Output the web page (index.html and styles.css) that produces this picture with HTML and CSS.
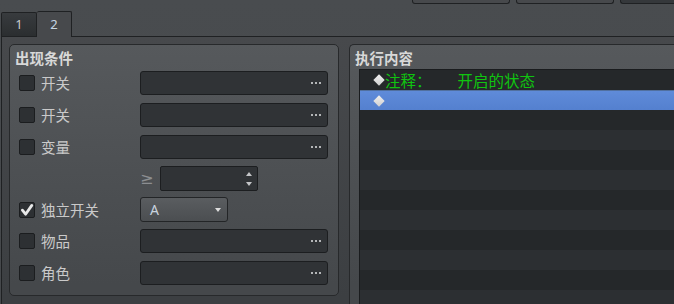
FILE: index.html
```html
<!DOCTYPE html>
<html>
<head>
<meta charset="utf-8">
<link rel="stylesheet" href="styles.css">
</head>
<body>
<div class="top">
  <div class="tbtn"></div>
  <div class="tbtn"></div>
  <div class="tbtn dark"></div>
</div>
<div class="tabbar">
  <div class="tab">1</div>
  <div class="tab active">2</div>
</div>
<div class="pane">
  <div class="group left">
    <div class="gtitle">出现条件</div>
    <div class="rows">
      <div class="row r1">
        <span class="chk"></span><span class="lbl">开关</span>
        <span class="field"><svg class="dots" width="10" height="2" viewBox="0 0 10 2"><rect x="0" y="0" width="2" height="2"/><rect x="4" y="0" width="2" height="2"/><rect x="8" y="0" width="2" height="2"/></svg></span>
      </div>
      <div class="row">
        <span class="chk"></span><span class="lbl">开关</span>
        <span class="field"><svg class="dots" width="10" height="2" viewBox="0 0 10 2"><rect x="0" y="0" width="2" height="2"/><rect x="4" y="0" width="2" height="2"/><rect x="8" y="0" width="2" height="2"/></svg></span>
      </div>
      <div class="row">
        <span class="chk"></span><span class="lbl">变量</span>
        <span class="field"><svg class="dots" width="10" height="2" viewBox="0 0 10 2"><rect x="0" y="0" width="2" height="2"/><rect x="4" y="0" width="2" height="2"/><rect x="8" y="0" width="2" height="2"/></svg></span>
      </div>
      <div class="row spinrow">
        <span class="indent"></span>
        <span class="ge">≥</span>
        <span class="spin"><span class="arrows"><span class="up"></span><span class="down"></span></span></span>
      </div>
      <div class="row comborow">
        <span class="chk on"><svg width="14" height="14" viewBox="0 0 14 14"><path d="M2.4 7.2 L5.6 11.2 L11.8 2.4" fill="none" stroke="#e8e8e8" stroke-width="2.8" stroke-linecap="round" stroke-linejoin="round"/></svg></span><span class="lbl">独立开关</span>
        <span class="combo"><span class="cval">A</span><span class="carrow"></span></span>
      </div>
      <div class="row">
        <span class="chk"></span><span class="lbl">物品</span>
        <span class="field"><svg class="dots" width="10" height="2" viewBox="0 0 10 2"><rect x="0" y="0" width="2" height="2"/><rect x="4" y="0" width="2" height="2"/><rect x="8" y="0" width="2" height="2"/></svg></span>
      </div>
      <div class="row">
        <span class="chk"></span><span class="lbl">角色</span>
        <span class="field"><svg class="dots" width="10" height="2" viewBox="0 0 10 2"><rect x="0" y="0" width="2" height="2"/><rect x="4" y="0" width="2" height="2"/><rect x="8" y="0" width="2" height="2"/></svg></span>
      </div>
    </div>
  </div>
  <div class="group right">
    <div class="gtitle rt">执行内容</div>
    <div class="list">
      <div class="lrow dark"><span class="dia"><i></i></span><span class="cmt">注释：</span><span class="cmt gap">开启的状态</span></div>
      <div class="lrow sel"><span class="dia"><i></i></span></div>
      <div class="lrow dark"></div>
      <div class="lrow light"></div>
      <div class="lrow dark"></div>
      <div class="lrow light"></div>
      <div class="lrow dark"></div>
      <div class="lrow light"></div>
      <div class="lrow dark"></div>
      <div class="lrow light"></div>
      <div class="lrow dark"></div>
      <div class="lrow light"></div>
    </div>
  </div>
</div>
</body>
</html>
```

FILE: styles.css
```css
html, body {
  margin: 0;
  padding: 0;
}
body {
  width: 674px;
  height: 304px;
  overflow: hidden;
  background: linear-gradient(#494c4f, #45484b);
  font-family: "Noto Sans CJK SC", "Noto Sans", sans-serif;
}
.top {
  height: 11px;
  display: flex;
  align-items: flex-start;
  gap: 6px;
  padding-left: 412px;
}
.tbtn {
  flex: none;
  width: 96px;
  height: 3px;
  border: 1px solid #1f2123;
  border-top: none;
  border-radius: 0 0 3px 3px;
  background: #47494c;
}
.tbtn.dark {
  width: 53px;
  border-right: none;
  border-radius: 0 0 0 3px;
  background: #35383b;
}
.tabbar {
  height: 25px;
  display: flex;
  align-items: flex-end;
  padding-left: 1px;
  position: relative;
  z-index: 2;
}
.tab {
  box-sizing: border-box;
  width: 36px;
  height: 24px;
  border: 1px solid #1f2123;
  border-bottom: none;
  border-radius: 2px 2px 0 0;
  background: linear-gradient(#383b3e, #2b2e30);
  color: #c9cbcd;
  font-family: "Noto Sans", sans-serif;
  font-size: 13px;
  line-height: 22px;
  text-align: center;
}
.tab.active {
  width: 35px;
  height: 26px;
  border-left: none;
  margin-bottom: -1px;
  background: #47494c;
  color: #c8d6e4;
  line-height: 24px;
}
.pane {
  margin-left: 1px;
  height: 260px;
  border-top: 1px solid #1f2123;
  border-left: 1px solid #1f2123;
  background: linear-gradient(#47494c, #3c3f42 260px);
  display: flex;
  gap: 10px;
  padding: 7px 0 0 7px;
}
.group {
  flex: none;
  box-sizing: border-box;
  border: 1px solid #27292b;
  border-radius: 5px;
  background: linear-gradient(#56595c, #45484b 240px);
}
.group.left {
  width: 330px;
  height: 252px;
}
.group.right {
  width: 325px;
  height: 260px;
  border-right: none;
  border-bottom: none;
  border-radius: 5px 0 0 0;
  overflow: hidden;
}
.gtitle {
  padding: 3px 0 0 5px;
  height: 20px;
  line-height: 20px;
  margin-bottom: 3px;
  font-size: 14.5px;
  font-weight: bold;
  color: #d8d8d8;
}
.gtitle.rt {
  margin-bottom: 1px;
}
.rows {
  display: flex;
  flex-direction: column;
  padding-left: 9px;
}
.row {
  display: flex;
  align-items: center;
  height: 24px;
  margin-top: 8px;
}
.row.r1 {
  margin-top: 0;
}
.row.spinrow {
  height: 25px;
  margin-top: 7px;
}
.row.comborow {
  height: 25px;
  margin-top: 6px;
}
.row.comborow + .row {
  margin-top: 7px;
}
.chk {
  flex: none;
  box-sizing: border-box;
  width: 16px;
  height: 16px;
  border: 1px solid #1b1d1f;
  border-radius: 2px;
  background: #2d3033;
  margin-right: 6px;
  display: flex;
}
.chk svg {
  display: block;
}
.lbl {
  flex: none;
  width: 99px;
  font-size: 14.5px;
  color: #cacaca;
  line-height: 20px;
}
.field {
  flex: none;
  box-sizing: border-box;
  width: 188px;
  height: 24px;
  border: 1px solid #1c1e20;
  border-radius: 3px;
  background: #303336;
  display: flex;
  align-items: center;
  justify-content: flex-end;
  padding-right: 6px;
}
.dots {
  display: block;
  fill: #b4b6b8;
}
.indent {
  flex: none;
  width: 121px;
}
.ge {
  flex: none;
  width: 20px;
  font-family: "DejaVu Sans", sans-serif;
  font-size: 16px;
  color: #8c8e91;
  line-height: 20px;
}
.spin {
  flex: none;
  box-sizing: border-box;
  width: 98px;
  height: 25px;
  border: 1px solid #1c1e20;
  border-radius: 2px;
  background: #303336;
  display: flex;
  justify-content: flex-end;
  align-items: center;
  padding-right: 5px;
}
.arrows {
  display: flex;
  flex-direction: column;
  gap: 6px;
}
.up {
  width: 0;
  height: 0;
  border-left: 3.5px solid transparent;
  border-right: 3.5px solid transparent;
  border-bottom: 4px solid #c4c6c8;
}
.down {
  width: 0;
  height: 0;
  border-left: 3.5px solid transparent;
  border-right: 3.5px solid transparent;
  border-top: 4px solid #c4c6c8;
}
.combo {
  flex: none;
  box-sizing: border-box;
  width: 88px;
  height: 25px;
  border: 1px solid #232527;
  border-radius: 3px;
  background: linear-gradient(#5a5d60, #4b4e51);
  display: flex;
  align-items: center;
  justify-content: space-between;
  padding: 0 6px 0 9px;
}
.cval {
  font-family: "Noto Sans", sans-serif;
  font-size: 14px;
  color: #c8d3de;
  line-height: 20px;
}
.carrow {
  width: 0;
  height: 0;
  border-left: 3.5px solid transparent;
  border-right: 3.5px solid transparent;
  border-top: 4px solid #dedede;
}
.list {
  margin-left: 9px;
  border-top: 1px solid #1a1c1e;
  border-left: 1px solid #1a1c1e;
  background: #25282a;
}
.lrow {
  height: 20px;
  display: flex;
  align-items: center;
}
.lrow.dark {
  background: #25282a;
}
.lrow.light {
  background: #2c2f32;
}
.lrow.sel {
  box-sizing: border-box;
  border-top: 1px solid #51709f;
  background: linear-gradient(#5f8bd9, #5480cf);
}
.dia {
  flex: none;
  width: 12px;
  margin-left: 13px;
  height: 12px;
  display: flex;
  align-items: center;
  justify-content: center;
}
.dia i {
  display: block;
  width: 8px;
  height: 8px;
  transform: rotate(45deg);
  background: linear-gradient(135deg, #f0f0f0, #cfcfcf);
}
.cmt {
  font-size: 15.5px;
  line-height: 20px;
  color: #10c410;
}
.cmt.gap {
  margin-left: 26px;
}
```
